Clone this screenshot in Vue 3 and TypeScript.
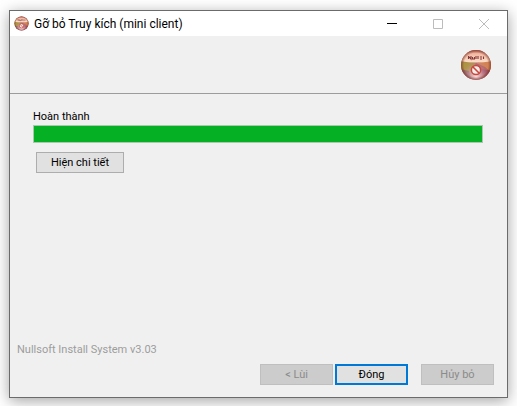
<script setup lang="ts">
import { ref } from 'vue'

const title = 'Gỡ bỏ Truy kích (mini client)'
const status = ref('Hoàn thành')
const progress = ref(100)
</script>

<template>
  <div class="desktop">
    <main class="window">
      <header class="titlebar">
        <svg class="app-icon" viewBox="0 0 32 32" aria-hidden="true">
          <use href="#uninstall-orb" />
        </svg>
        <h1 class="title">{{ title }}</h1>
        <button class="caption" type="button" aria-label="Minimize">
          <svg viewBox="0 0 10 10"><path d="M0 4.5H10" stroke="#000" /></svg>
        </button>
        <button class="caption" type="button" aria-label="Maximize" disabled>
          <svg viewBox="0 0 10 10"><path d="M.5 .5H9.5V9.5H.5Z" fill="none" stroke="#bcbcbc" /></svg>
        </button>
        <button class="caption" type="button" aria-label="Close" disabled>
          <svg viewBox="0 0 10 10"><path d="M0 0L10 10M10 0L0 10" stroke="#bcbcbc" /></svg>
        </button>
      </header>

      <div class="banner">
        <svg class="logo" viewBox="0 0 32 32" aria-hidden="true">
          <defs>
            <linearGradient id="orb-top" x1="0" y1="0" x2="0" y2="1">
              <stop offset="0" stop-color="#b5584a" />
              <stop offset=".35" stop-color="#f2b8a2" />
              <stop offset="1" stop-color="#fbdfca" />
            </linearGradient>
            <linearGradient id="orb-base" x1="0" y1=".4" x2="1" y2=".6">
              <stop offset="0" stop-color="#a8793f" />
              <stop offset=".3" stop-color="#b98a68" />
              <stop offset=".6" stop-color="#a8587a" />
              <stop offset="1" stop-color="#a94b2c" />
            </linearGradient>
            <radialGradient id="orb-glow" cx=".5" cy=".85" r=".5">
              <stop offset="0" stop-color="#f8dcd8" />
              <stop offset="1" stop-color="#c58599" stop-opacity="0" />
            </radialGradient>
            <radialGradient id="orb-shade" cx=".5" cy=".5" r=".5">
              <stop offset=".8" stop-color="#7c3328" stop-opacity="0" />
              <stop offset="1" stop-color="#7c3328" stop-opacity=".7" />
            </radialGradient>
            <clipPath id="orb-clip"><circle cx="16" cy="16" r="15" /></clipPath>
          </defs>
          <g id="uninstall-orb">
            <circle cx="16" cy="16" r="15" fill="url(#orb-base)" />
            <g clip-path="url(#orb-clip)">
              <path d="M0 13L16 14L9 23L0 22Z" fill="#a99a3c" opacity=".75" />
              <path d="M0 20L9 22L12 32H4Z" fill="#7d4a68" opacity=".6" />
              <path d="M16 14L32 11V22L22 20Z" fill="#dc9058" opacity=".8" />
              <path d="M16 14L26 30L32 24L25 18Z" fill="#8e3e64" opacity=".5" />
              <circle cx="16" cy="17" r="15" fill="url(#orb-glow)" />
              <path d="M0 0H32V12Q16 15 0 12Z" fill="url(#orb-top)" />
            </g>
            <circle cx="16" cy="16" r="15" fill="url(#orb-shade)" />
            <path d="M8.5 7V10M8.5 7.3L11 10V7M12.5 8V10H14.5V8M16 7V10M18 7V10M20 8H22M20 10H22M23.5 7.5V10" fill="none" stroke="#81363a" stroke-width="1.1" />
            <circle cx="16" cy="21" r="4.6" fill="#fbeeea" stroke="#c8463c" stroke-width="1.5" />
            <path d="M13 18L19 24" stroke="#c8463c" stroke-width="1.6" />
          </g>
        </svg>
      </div>

      <section class="content">
        <label class="status" for="progress">{{ status }}</label>
        <progress id="progress" class="progress" :value="progress" max="100"></progress>
        <button class="button details" type="button">Hiện chi tiết</button>
      </section>

      <footer class="footer">
        <p class="branding">Nullsoft Install System v3.03</p>
        <div class="actions">
          <button class="button" type="button" disabled>&lt; Lùi</button>
          <button class="button primary" type="button">Đóng</button>
          <button class="button cancel" type="button" disabled>Hủy bỏ</button>
        </div>
      </footer>
    </main>
  </div>
</template>

<style>
body {
  margin: 0;
  background: #fff;
}
</style>

<style scoped>
.desktop {
  box-sizing: border-box;
  min-height: 100vh;
  padding: 10px 9px 8px;
  display: flex;
  overflow: hidden;
  font-family: Roboto, "Noto Sans", sans-serif;
  font-size: 11px;
  line-height: 14px;
  color: #000;
}

.window {
  flex: 1;
  display: flex;
  flex-direction: column;
  background: #f0f0f0;
  border: 1px solid #6b6b6b;
  box-shadow: 0 3px 14px rgba(0, 0, 0, 0.36);
}

.titlebar {
  display: flex;
  align-items: center;
  height: 25px;
  padding-left: 4px;
  background: #fff;
}

.app-icon {
  width: 15px;
  height: 15px;
}

.title {
  flex: 1;
  margin: 0 0 0 5px;
  font-size: 12px;
  font-weight: 400;
  line-height: 16px;
}

.caption {
  display: flex;
  align-items: center;
  justify-content: center;
  width: 46px;
  height: 25px;
  padding: 0;
  border: 0;
  background: none;
}

.caption svg {
  width: 10px;
  height: 10px;
}

.banner {
  display: flex;
  align-items: center;
  justify-content: flex-end;
  height: 57px;
  padding-right: 15px;
  border-bottom: 1px solid #9c9c9c;
}

.logo {
  width: 32px;
  height: 32px;
}

.content {
  flex: 1;
  display: flex;
  flex-direction: column;
  padding: 16px 24px 0 23px;
}

.status {
  margin-bottom: 1px;
}

.progress {
  appearance: none;
  box-sizing: border-box;
  width: 100%;
  height: 18px;
  border: 1px solid #a9c9ac;
  background: #e6e6e6;
}

.progress::-webkit-progress-bar {
  background: #e6e6e6;
}

.progress::-webkit-progress-value {
  background: #06b025;
}

.button {
  box-sizing: border-box;
  width: 73px;
  height: 21px;
  padding: 0;
  border: 1px solid #adadad;
  background: #e1e1e1;
  font: inherit;
  color: #000;
}

.button:disabled {
  border-color: #bfbfbf;
  background: #ccc;
  color: #8b8b8b;
}

.details {
  width: 88px;
  margin: 9px 0 0 3px;
}

.primary {
  border: 2px solid #0078d7;
}

.footer {
  padding: 0 13px 12px 7px;
}

.branding {
  margin: 0 0 7px;
  color: #9d9d9d;
}

.actions {
  display: flex;
  justify-content: flex-end;
  gap: 2px;
}

.cancel {
  margin-left: 11px;
}
</style>
